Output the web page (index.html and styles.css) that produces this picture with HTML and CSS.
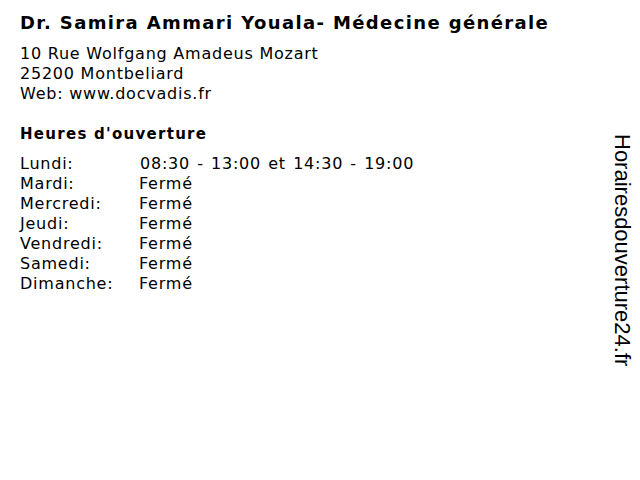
FILE: index.html
```html
<!DOCTYPE html>
<html lang="fr">
<head>
<meta charset="utf-8">
<title>Dr. Samira Ammari Youala</title>
<link rel="stylesheet" href="styles.css">
</head>
<body>
<div class="page">
  <main class="main">
    <h1 class="title">Dr. Samira Ammari Youala- Médecine générale</h1>
    <div class="address">
      <div>10 Rue Wolfgang Amadeus Mozart</div>
      <div>25200 Montbeliard</div>
      <div>Web: www.docvadis.fr</div>
    </div>
    <h2 class="hours-title">Heures d'ouverture</h2>
    <div class="hours">
      <span class="day">Lundi:</span><span class="time time-open">08:30 - 13:00 et 14:30 - 19:00</span>
      <span class="day">Mardi:</span><span class="time">Fermé</span>
      <span class="day">Mercredi:</span><span class="time">Fermé</span>
      <span class="day">Jeudi:</span><span class="time">Fermé</span>
      <span class="day">Vendredi:</span><span class="time">Fermé</span>
      <span class="day">Samedi:</span><span class="time">Fermé</span>
      <span class="day">Dimanche:</span><span class="time">Fermé</span>
    </div>
  </main>
  <aside class="side">Horairesdouverture24.fr</aside>
</div>
</body>
</html>
```

FILE: styles.css
```css
html, body {
  margin: 0;
  padding: 0;
  background: #ffffff;
}
.page {
  display: flex;
  justify-content: space-between;
  width: 640px;
  height: 480px;
  color: #000000;
  font-family: "DejaVu Sans", Verdana, sans-serif;
}
.main {
  padding: 11px 0 0 20px;
}
.title {
  margin: 0;
  font-size: 18px;
  line-height: 24px;
  font-weight: bold;
  letter-spacing: 1.37px;
}
.address {
  margin-top: 9px;
  font-size: 16px;
  line-height: 20px;
  letter-spacing: 0.77px;
}
.hours-title {
  margin: 20px 0 0 0;
  font-size: 15px;
  line-height: 20px;
  font-weight: bold;
  letter-spacing: 1.28px;
}
.hours {
  margin-top: 10px;
  display: grid;
  grid-template-columns: 119px auto;
  font-size: 16px;
  line-height: 20px;
  letter-spacing: 0.77px;
}
.time-open {
  padding-left: 1px;
  word-spacing: 1.4px;
}
.side {
  writing-mode: vertical-rl;
  margin-top: 134px;
  margin-right: 6px;
  font-family: "Liberation Sans", Arial, sans-serif;
  font-size: 22px;
  line-height: 24px;
  height: max-content;
}
```
